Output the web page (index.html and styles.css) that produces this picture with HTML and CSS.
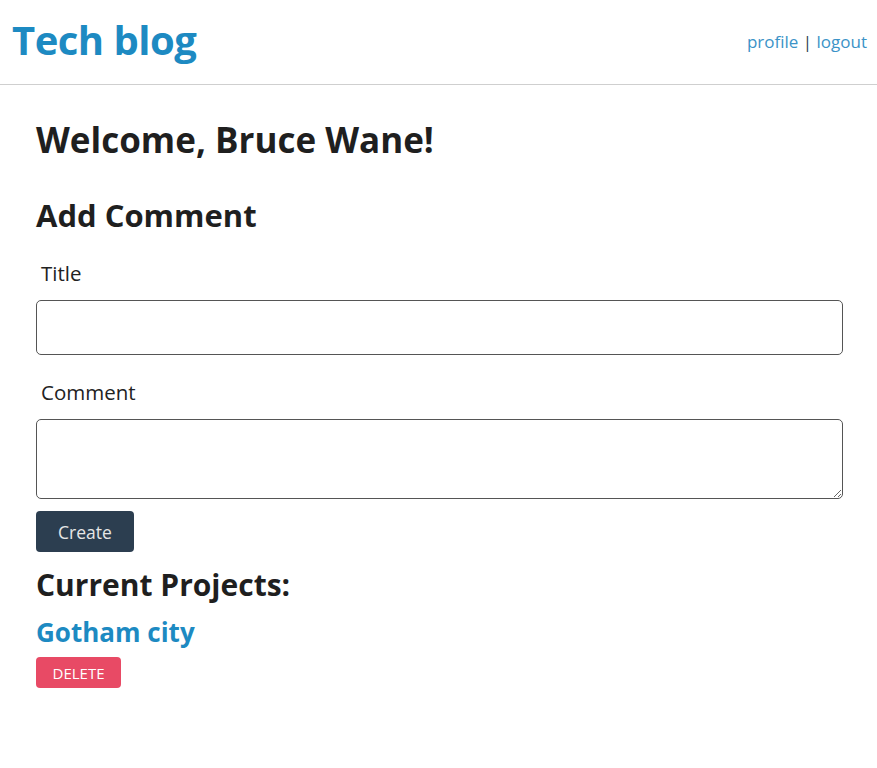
FILE: index.html
```html
<!DOCTYPE html>
<html lang="en">
<head>
<meta charset="utf-8">
<title>Tech blog</title>
<link rel="stylesheet" href="styles.css">
</head>
<body>
<header class="site-header">
  <a class="brand" href="#">Tech blog</a>
  <nav class="nav">
    <a href="#">profile</a> <span class="sep">|</span> <a href="#">logout</a>
  </nav>
</header>
<main class="content">
  <h1 class="welcome">Welcome, Bruce Wane!</h1>
  <h2 class="section-title">Add Comment</h2>
  <form class="comment-form">
    <label class="field-label label-title" for="title">Title</label>
    <input class="field-input" id="title" type="text">
    <label class="field-label label-comment" for="comment">Comment</label>
    <textarea class="field-textarea" id="comment"></textarea>
    <button class="btn-create" type="button">Create</button>
  </form>
  <h2 class="projects-title">Current Projects:</h2>
  <a class="project-name" href="#">Gotham city</a>
  <button class="btn-delete" type="button">DELETE</button>
</main>
</body>
</html>
```
FILE: styles.css
```css
* { box-sizing: border-box; }
body {
  margin: 0;
  font-family: "Open Sans", "Noto Sans", sans-serif;
  color: #1f1f1f;
  background: #fff;
}
a { text-decoration: none; }
.site-header {
  height: 85px;
  border-bottom: 1px solid #cfcfcf;
  display: flex;
  align-items: center;
  justify-content: space-between;
  padding: 0 10px 0 12px;
}
.brand {
  font-size: 40px;
  font-weight: 700;
  color: #1d8ac2;
  letter-spacing: -0.5px;
  margin-top: -6px;
}
.nav {
  font-size: 17px;
  color: #2c3e50;
  margin-top: -2px;
}
.nav a { color: #3b93c7; }
.content {
  padding: 0 34px 0 36px;
  display: flex;
  flex-direction: column;
  align-items: flex-start;
}
.welcome {
  font-size: 35px;
  font-weight: 700;
  line-height: 1;
  margin: 37px 0 0;
}
.section-title {
  font-size: 31px;
  font-weight: 700;
  line-height: 1;
  margin: 43px 0 0;
}
.comment-form {
  width: 100%;
  display: flex;
  flex-direction: column;
  align-items: flex-start;
}
.field-label {
  font-size: 20.5px;
  line-height: 24px;
  margin-left: 5px;
  color: #222;
}
.label-title { margin-top: 30px; }
.label-comment { margin-top: 25px; }
.field-input {
  width: 100%;
  height: 55px;
  margin-top: 15px;
  border: 1px solid #555;
  border-radius: 5px;
  font: inherit;
}
.field-textarea {
  width: 100%;
  height: 80px;
  margin-top: 15px;
  border: 1px solid #555;
  border-radius: 5px;
  font: inherit;
  resize: vertical;
  display: block;
}
.btn-create {
  margin-top: 12px;
  width: 98px;
  height: 41px;
  background: #2c3e50;
  color: #e6e6e6;
  border: none;
  border-radius: 4px;
  font-family: inherit;
  font-size: 17.5px;
}
.projects-title {
  font-size: 30px;
  font-weight: 700;
  line-height: 1;
  margin: 18px 0 0;
}
.project-name {
  font-size: 26px;
  font-weight: 700;
  line-height: 1;
  color: #1d8ac2;
  margin-top: 19px;
}
.btn-delete {
  margin-top: 12px;
  width: 85px;
  height: 31px;
  background: #e84a65;
  color: #fff;
  border: none;
  border-radius: 4px;
  font-family: inherit;
  font-size: 15px;
}
```
